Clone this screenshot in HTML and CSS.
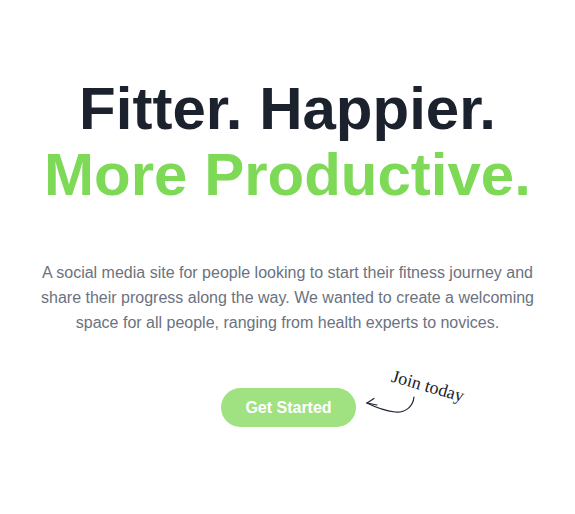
FILE: index.html
```html
<!DOCTYPE html>
<html lang="en">
<head>
<meta charset="utf-8">
<title>Fitter. Happier. More Productive.</title>
<link rel="stylesheet" href="styles.css">
</head>
<body>
<main class="hero">
  <h1 class="title">
    <span class="title-dark">Fitter. Happier.</span>
    <span class="title-green">More Productive.</span>
  </h1>
  <p class="lead">A social media site for people looking to start their fitness journey and share their progress along the way. We wanted to create a welcoming space for all people, ranging from health experts to novices.</p>
  <div class="cta">
    <a class="btn" href="#">Get Started</a>
    <div class="note">
      <span class="note-text">Join today</span>
      <svg class="note-arrow" width="54" height="24" viewBox="0 0 54 24" fill="none" stroke="#1f2433" stroke-width="1.2" stroke-linecap="round" stroke-linejoin="round">
        <path d="M50 4 C49 14 41 20 31 19 C22 18 13 15 3 10"/>
        <path d="M3 10 L10 5.5"/>
        <path d="M3 10 L13 12"/>
      </svg>
    </div>
  </div>
</main>
</body>
</html>
```

FILE: styles.css
```css
html, body {
  margin: 0;
  padding: 0;
  background: #ffffff;
}

body {
  font-family: "Liberation Sans", Arial, sans-serif;
}

.hero {
  display: flex;
  flex-direction: column;
  align-items: center;
  padding-top: 76px;
}

.title {
  margin: 0;
  font-size: 60px;
  line-height: 66px;
  font-weight: 700;
  text-align: center;
  letter-spacing: 0;
}

.title span {
  display: block;
}

.title-dark {
  color: #1c212e;
}

.title-green {
  color: #7ed957;
}

.lead {
  margin: 52px 0 0;
  width: 512px;
  text-align: center;
  font-size: 16px;
  line-height: 25px;
  color: #6b7280;
}

.cta {
  position: relative;
  margin-top: 53px;
  display: flex;
  justify-content: center;
  width: 512px;
}

.btn {
  display: inline-block;
  margin-left: 2px;
  padding: 8px 24px;
  line-height: 23px;
  border-radius: 999px;
  background: #a0e282;
  color: #ffffff;
  font-weight: 700;
  font-size: 16px;
  text-decoration: none;
}

.note {
  position: absolute;
  left: 332px;
  top: -24px;
  width: 120px;
  height: 60px;
}

.note-text {
  position: absolute;
  left: 31px;
  top: 2px;
  font-family: "Liberation Serif", "Times New Roman", serif;
  font-size: 18px;
  color: #1c212e;
  transform: rotate(16deg);
  transform-origin: left top;
  white-space: nowrap;
}

.note-arrow {
  position: absolute;
  left: 0;
  top: 29px;
}
```
